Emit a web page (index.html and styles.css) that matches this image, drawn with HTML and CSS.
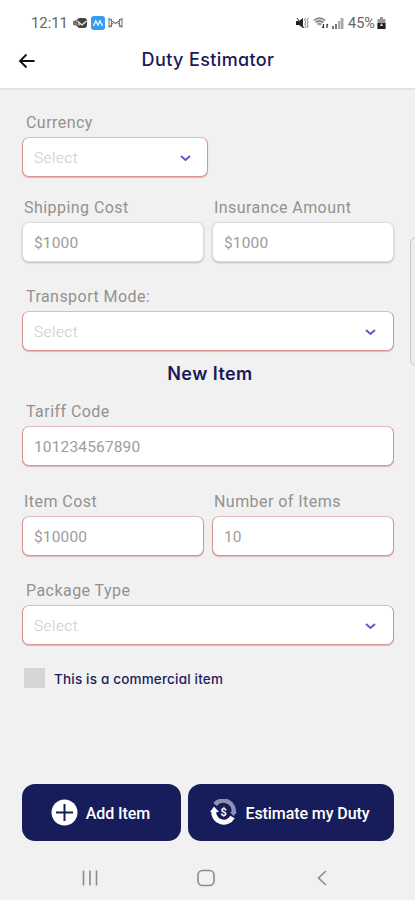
FILE: index.html
```html
<!DOCTYPE html>
<html lang="en">
<head>
<meta charset="utf-8">
<title>Duty Estimator</title>
<link rel="stylesheet" href="styles.css">
</head>
<body>
<div class="status">
  <span class="clock">12:11</span>
  <svg class="s-cam" width="15" height="12" viewBox="0 0 15 12"><path d="M0 4l4-1v6l-4-1z" fill="#777"/><rect x="4" y="1" width="10" height="10" rx="3" fill="#444"/><path d="M4.500 4l4.500 4 4.500-4" fill="none" stroke="#eee" stroke-width="1.300"/><circle cx="6" cy="7" r="1.500" fill="#bbb"/></svg>
  <svg class="s-app" width="14" height="14" viewBox="0 0 14 14"><rect width="14" height="14" rx="3" fill="#369bf3"/><path d="M2.500 10l2.300-5 2.200 4 2-4 2.500 5" fill="none" stroke="#d9f1ff" stroke-width="1.500"/></svg>
  <svg class="s-mail" width="15" height="12" viewBox="0 0 15 12"><path d="M1 10.500V1.500l6.500 5 6.500-5v9M1 10.500l4-4.500M14 10.500L10 6M3.500 2v8M11.500 2v8" fill="none" stroke="#777" stroke-width="1.100"/></svg>
  <span class="grow"></span>
  <svg class="s-mute" width="13" height="12" viewBox="0 0 13 12"><path d="M0 4h3l4-3v10L3 8H0z" fill="#222"/><path d="M1 1l7 10" stroke="#333"/><path d="M9.500 1l-1 2 1.500 2-1.500 2 1.500 2-1 2M12 1l-1 2 1.200 2L11 7l1.200 2-1 2" fill="none" stroke="#777" stroke-width=".9"/></svg>
  <svg class="s-wifi" width="16" height="12" viewBox="0 0 16 12"><path d="M.5 3.200Q6.500-1.800 12.500 3.200L6.500 9z" fill="#ccc"/><path d="M.7 3.300Q6.500-1.500 12.300 3.300M2.700 5.500q3.800-3.200 7.600 0M4.700 7.500q1.800-1.500 3.600 0" fill="none" stroke="#777" stroke-width="1.100"/><path d="M10.500 7v4m-1.400-1.500l1.400 1.500M14 11V7m1 1.500L14 7" fill="none" stroke="#333" stroke-width="1.200"/></svg>
  <svg class="s-signal" width="12" height="12" viewBox="0 0 12 12"><path d="M0 9h2v3H0zM3 7h2v5H3z" fill="#777"/><path d="M6 4h2v8H6zM8.500 1h3v11h-3z" fill="#aaa"/></svg>
  <span class="pct">45%</span>
  <svg class="s-bat" width="9" height="12" viewBox="0 0 9 12"><path d="M3 0h3v2h2.500v10H.5V2H3z" fill="#999"/><path d="M.5 6h8v6h-8z" fill="#222"/><path d="M4.500 6L3 9h3z" fill="#ddd"/></svg>
</div>
<header class="header">
  <svg class="back" width="18" height="16" viewBox="0 0 18 16"><path d="M16.500 8H2M8.500 1.500L2 8l6.500 6.500" fill="none" stroke="#111" stroke-width="1.900"/></svg>
  <h1>Duty Estimator</h1>
</header>
<main>
  <div class="field half-select"><label class="in">Currency</label><div class="box red select"><span>Select</span><svg width="11" height="7" viewBox="0 0 11 7"><path d="M1 1l4.500 4L10 1" /></svg></div></div>
  <div class="row ship">
    <div class="field"><label>Shipping Cost</label><div class="box plain"><span>$1000</span></div></div>
    <div class="field"><label>Insurance Amount</label><div class="box plain"><span>$1000</span></div></div>
  </div>
  <div class="field transport"><label class="in">Transport Mode:</label><div class="box red select"><span>Select</span><svg width="11" height="7" viewBox="0 0 11 7"><path d="M1 1l4.500 4L10 1" /></svg></div></div>
  <h2>New Item</h2>
  <div class="field"><label class="in">Tariff Code</label><div class="box red"><span>101234567890</span></div></div>
  <div class="row cost">
    <div class="field"><label>Item Cost</label><div class="box red"><span>$10000</span></div></div>
    <div class="field"><label>Number of Items</label><div class="box red"><span>10</span></div></div>
  </div>
  <div class="field package"><label class="in">Package Type</label><div class="box red select"><span>Select</span><svg width="11" height="7" viewBox="0 0 11 7"><path d="M1 1l4.500 4L10 1" /></svg></div></div>
  <div class="check"><i></i><span>This is a commercial item</span></div>
  <div class="actions">
    <button class="add"><svg width="27" height="27" viewBox="0 0 27 27"><circle cx="13.500" cy="13.500" r="13" fill="#fff"/><path d="M13.500 5v17M5 13.500h17" stroke="#171d5b" stroke-width="2"/></svg><span>Add Item</span></button>
    <button class="estimate"><svg width="27" height="27" viewBox="0 0 27 27"><path d="M5 5.500A10.500 10.500 0 0 1 23.500 14" fill="none" stroke="#8c91b5" stroke-width="4.500"/><path d="M20 13h7l-3.500 4z" fill="#8c91b5"/><path d="M3.800 12A10 10 0 0 0 22.500 18" fill="none" stroke="#fff" stroke-width="5"/><path d="M0 13l4-5.500L9 13z" fill="#fff"/><text x="13.500" y="17" text-anchor="middle">$</text></svg><span>Estimate my Duty</span></button>
  </div>
</main>
<nav>
  <svg width="16" height="16" viewBox="0 0 16 16"><path d="M1.500 .5v15M8 .5v15M14.500 .5v15"/></svg>
  <svg class="home" width="18" height="18" viewBox="0 0 18 18"><rect x="1" y="1.500" width="16" height="15" rx="4.500"/></svg>
  <svg width="10" height="16" viewBox="0 0 10 16"><path d="M9 1L1.500 8 9 15"/></svg>
</nav>
<div class="edge"></div>
</body>
</html>
```

FILE: styles.css
```css
* { box-sizing: border-box; }
body { margin: 0; width: 415px; height: 900px; overflow: hidden; position: relative; background: #f1f1f1; font-family: Roboto, "Liberation Sans", sans-serif; }
.status { height: 44px; padding: 2px 29px 0 31px; display: flex; align-items: center; background: #fff; color: #666; font-size: 15px; }
.clock { width: 42px; letter-spacing: -.1px; }
.s-app { margin: 0 3px 0 3px; }
.grow { flex: 1; }
.s-wifi { margin: 0 3px 0 4px; }
.s-signal { margin-right: 4px; }
.pct { font-size: 14.500px; width: 29px; }
.header { height: 46px; background: #fff; border-bottom: 2px solid #e2e2e2; position: relative; display: flex; justify-content: center; }
.back { position: absolute; left: 18px; top: 9px; }
h1, h2 { margin: 0; font-family: Inter, sans-serif; font-feature-settings: "cv11"; color: #1b1859; text-align: center; }
h1 { font-size: 18px; font-weight: 500; line-height: 32px; letter-spacing: .38px; padding-left: 1px; }
h2 { font-size: 18px; font-weight: 600; line-height: 22px; margin: 12px 0 16px; padding-left: 4px; letter-spacing: .45px; }
main { padding: 22px 21px 0 22px; }
.field label { display: block; padding-left: 2px; height: 20px; margin-bottom: 5px; line-height: 21px; font-size: 16px; letter-spacing: .45px; color: #929292; white-space: nowrap; }
.field label.in { padding-left: 4px; }
.box { height: 40px; padding: 1px 18px 0 11px; border-radius: 7px; background: #fff; display: flex; align-items: center; justify-content: space-between; color: #9c9c9c; font-size: 15.500px; letter-spacing: .15px; }
.red { border: 1px solid #db9494; border-top-color: #dfbaba; box-shadow: 0 1px 1px #d8b8b8; }
.plain { border: 1px solid #dcdcdc; box-shadow: 0 1px 2px #bbb; }
.select { padding-top: 2px; color: #c9c9c9; font-weight: 300; letter-spacing: .4px; }
.select path { fill: none; stroke: #6253cf; stroke-width: 1.900; }
.half-select { width: 186px; }
.half-select .box { padding-right: 16px; }
.transport .box, .package .box { padding-right: 17px; }
.row { display: grid; grid-template-columns: 182px 182px; gap: 8px; }
.ship { margin-top: 20px; }
.transport { margin-top: 24px; }
.cost { margin-top: 25px; }
.package { margin-top: 24px; }
.check { margin-top: 23px; height: 20px; padding-left: 2px; display: flex; align-items: center; gap: 9px; font-family: Inter, sans-serif; font-feature-settings: "cv11"; font-size: 13.500px; font-weight: 500; letter-spacing: .18px; color: #211c60; }
.check span { padding-top: 2px; }
.check i { width: 21px; height: 20px; background: #d5d5d5; }
.actions { margin-top: 96px; display: grid; grid-template-columns: 159px 206px; gap: 7px; }
button { height: 57px; border: 0; border-radius: 13px; background: #171d5b; color: #fff; font: 500 16px Roboto, sans-serif; letter-spacing: -.08px; display: flex; align-items: center; justify-content: center; gap: 8px; padding: 0 2px 0 0; white-space: nowrap; }
button span { padding-top: 2px; }
button text { font: 700 11px Roboto, sans-serif; fill: #fff; }
nav { height: 18px; margin-top: 28px; padding: 0 88px 0 82px; display: grid; grid-template-columns: 16px 1fr 10px; align-items: center; }
nav svg { fill: none; stroke: #8b8b8b; stroke-width: 1.600; }
nav .home { margin-left: 99px; }
.edge { position: absolute; left: 410px; top: 237px; width: 12px; height: 129px; border: 1px solid #c4c4c4; border-radius: 6px; background: #ededed; }
```
